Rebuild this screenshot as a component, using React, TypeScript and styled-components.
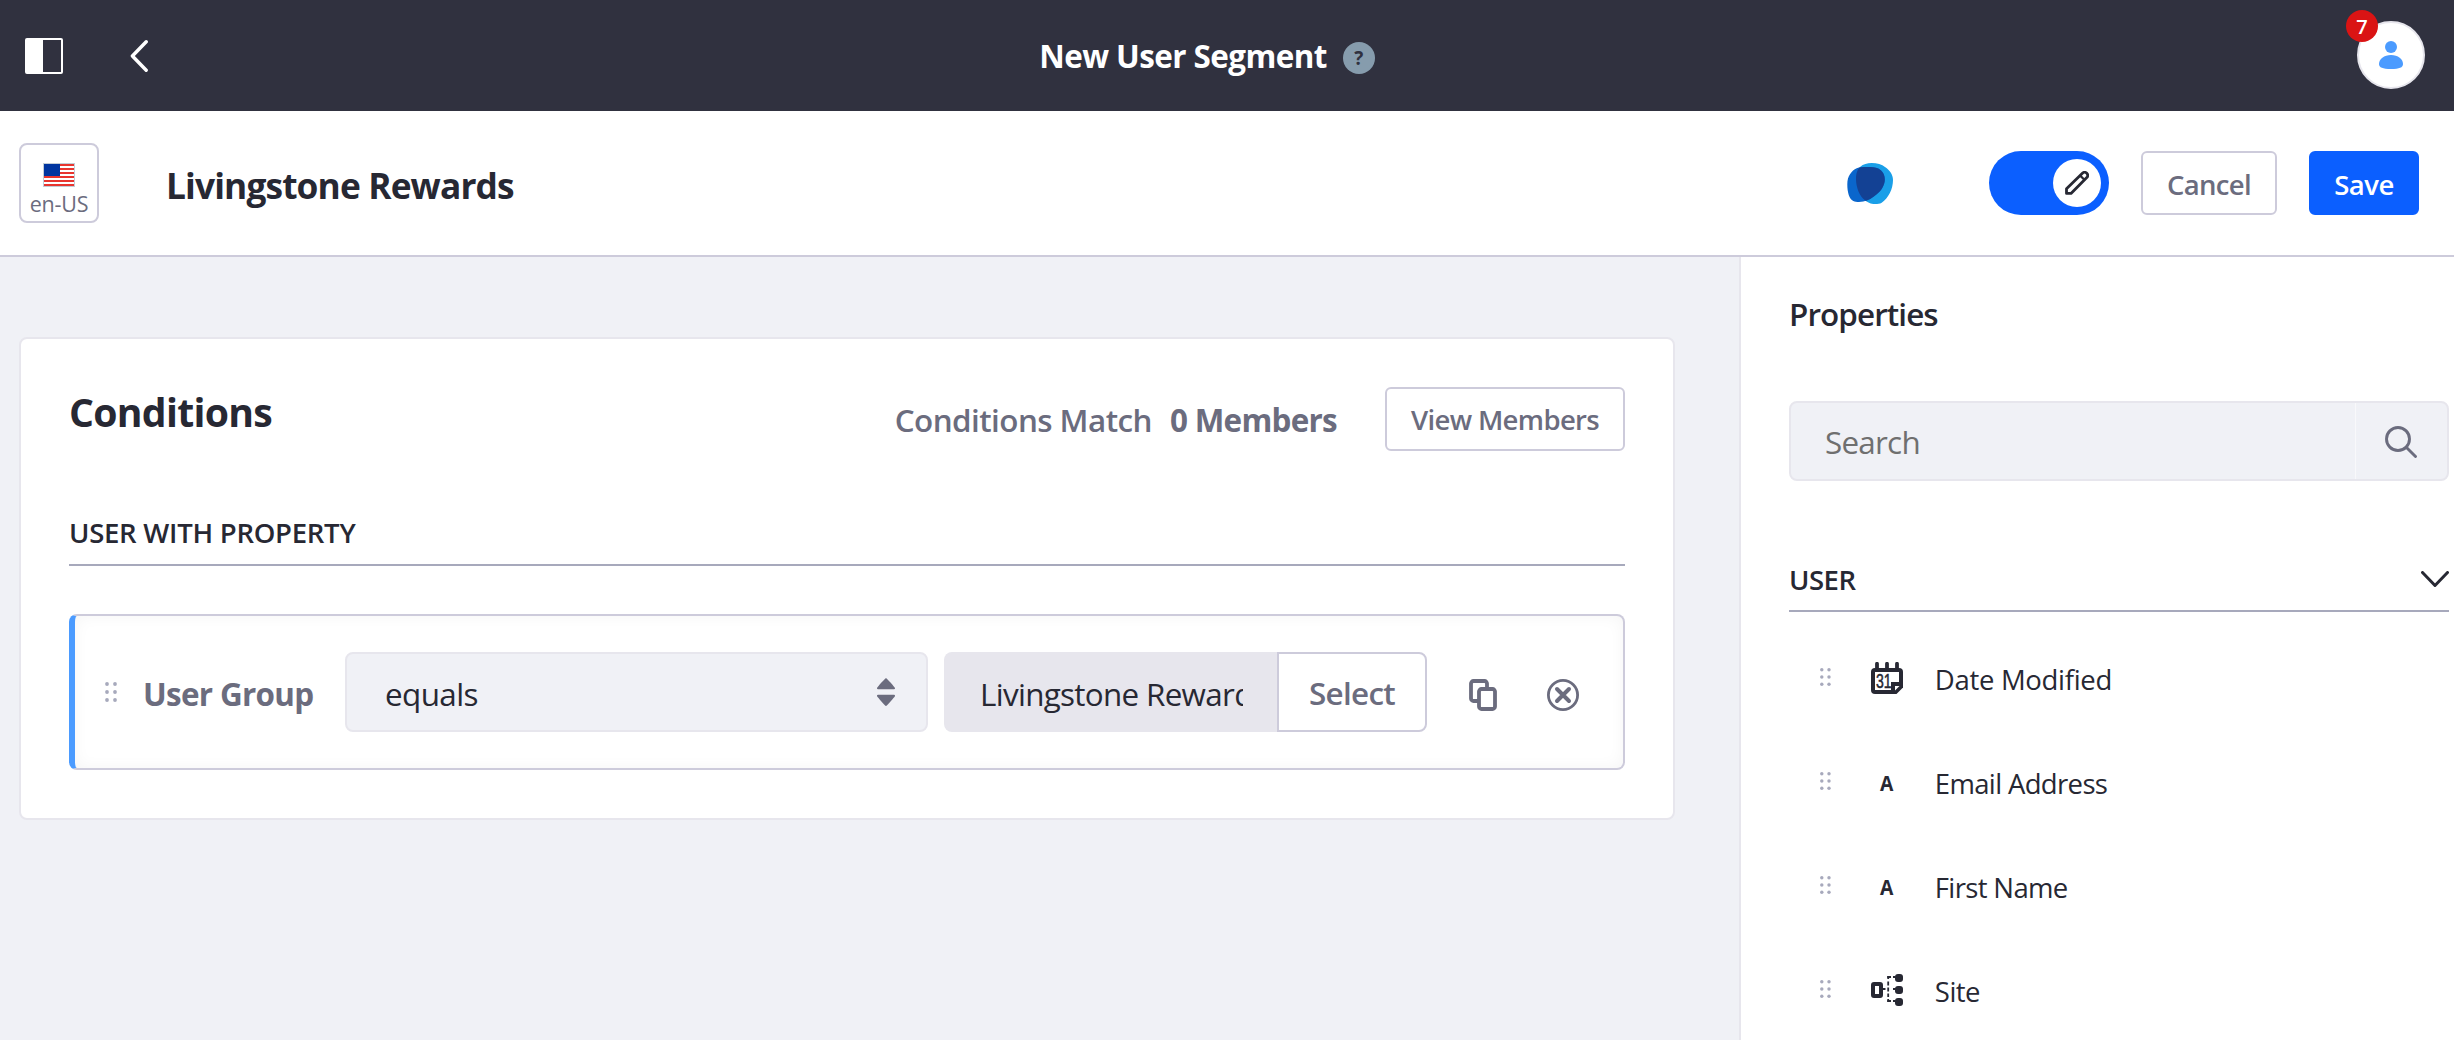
import React from 'react';
import styled, { createGlobalStyle, css } from 'styled-components';

const color = {
  dark: '#30313f',
  ink: '#272833',
  muted: '#6b6c7e',
  line: '#a7a9bc',
  border: '#cdcbdb',
  soft: '#e7e6ed',
  bg: '#f0f1f6',
  primary: '#0b5fff',
  info: '#4b9bff',
};

const GlobalStyle = createGlobalStyle`
  *, *::before, *::after { box-sizing: border-box; }
  body {
    margin: 0;
    background: ${color.bg};
    color: ${color.ink};
    font-family: 'Open Sans', 'Noto Sans', sans-serif;
  }
  svg { display: block; flex: none; }
  button, input { font-family: inherit; }
`;

const Page = styled.div`
  display: flex;
  flex-direction: column;
  width: 100%;
  height: 1040px;
  overflow: hidden;
`;

/* ---------- text ---------- */

const Label = styled.span<{ $size?: number; $weight?: number; $track?: number; $tone?: string; $drop?: number }>`
  display: block;
  white-space: nowrap;
  line-height: 40px;
  font-size: ${(p) => p.$size ?? 31.4}px;
  font-weight: ${(p) => p.$weight ?? 400};
  letter-spacing: ${(p) => p.$track ?? 0}px;
  color: ${(p) => p.$tone ?? 'inherit'};
  padding-top: ${(p) => p.$drop ?? 0}px;
`;

/* ---------- header ---------- */

const Header = styled.header`
  display: flex;
  align-items: center;
  flex: none;
  height: 111px;
  padding: 0 29px 1px 25px;
  background: ${color.dark};
  color: #fff;
`;

const HeaderNav = styled.nav`
  display: flex;
  align-items: center;
  gap: 67px;
  padding-top: 2px;
`;

const HeaderTitle = styled.div`
  display: flex;
  flex: 1;
  align-items: center;
  justify-content: center;
  gap: 16px;
  padding-right: 91px;
`;

const Help = styled.span`
  display: flex;
  align-items: center;
  justify-content: center;
  width: 32px;
  height: 32px;
  margin-top: 6px;
  border-radius: 50%;
  background: #869cad;
  color: ${color.dark};
  font-size: 19px;
  font-weight: 700;
  line-height: 32px;
`;

const Avatar = styled.div`
  position: relative;
  display: flex;
  align-items: center;
  justify-content: center;
  width: 68px;
  height: 68px;
  border: 2px solid ${color.soft};
  border-radius: 50%;
  background: #fff;
`;

const Badge = styled.span`
  position: absolute;
  top: -13px;
  left: -13px;
  width: 32px;
  height: 32px;
  border-radius: 50%;
  background: #da1414;
  color: #fff;
  font-size: 20px;
  font-weight: 600;
  line-height: 33px;
  text-align: center;
`;

/* ---------- toolbar ---------- */

const Toolbar = styled.div`
  display: flex;
  align-items: center;
  flex: none;
  height: 146px;
  padding: 0 35px 0 19px;
  border-bottom: 2px solid ${color.border};
  background: #fff;
`;

const Locale = styled.button`
  display: flex;
  flex-direction: column;
  align-items: center;
  width: 80px;
  height: 80px;
  padding: 18px 0 0;
  border: 2px solid ${color.border};
  border-radius: 8px;
  background: #fff;
  color: ${color.muted};
  font-size: 21.5px;
  letter-spacing: -0.2px;
  line-height: 28px;
`;

const LocaleText = styled.span`
  padding-top: 3px;
`;

const SegmentName = styled.div`
  flex: 1;
  padding-left: 67px;
`;

const Actions = styled.div`
  display: flex;
  align-items: center;
  gap: 32px;
`;

const Logo = styled.div`
  margin-right: 63px;
`;

const Toggle = styled.div`
  display: flex;
  align-items: center;
  justify-content: flex-end;
  width: 120px;
  height: 64px;
  padding: 8px;
  border-radius: 32px;
  background: ${color.primary};
`;

const Knob = styled.span`
  display: flex;
  align-items: center;
  justify-content: center;
  width: 48px;
  height: 48px;
  border-radius: 50%;
  background: #fff;
`;

const Button = styled.button<{ $width: number; $primary?: boolean }>`
  display: flex;
  align-items: center;
  justify-content: center;
  width: ${(p) => p.$width}px;
  height: 64px;
  padding: 0;
  border: 2px solid ${color.border};
  border-radius: 6px;
  background: #fff;
  color: ${color.muted};
  ${(p) =>
    p.$primary &&
    css`
      border-color: ${color.primary};
      background: ${color.primary};
      color: #fff;
    `}
`;

/* ---------- body ---------- */

const Body = styled.div`
  display: flex;
  flex: 1;
  min-height: 0;
`;

const Main = styled.main`
  flex: 1;
  min-width: 0;
  padding: 80px 64px 0 19px;
`;

const Card = styled.section`
  height: 483px;
  padding: 48px 48px 0;
  border: 2px solid ${color.soft};
  border-radius: 8px;
  background: #fff;
`;

const CardHeader = styled.div`
  display: flex;
  align-items: flex-start;
  height: 126px;
`;

const CardTitle = styled.h2`
  flex: 1;
  margin: 0;
  line-height: 50px;
  font-size: 39.2px;
  font-weight: 700;
  letter-spacing: -0.72px;
`;

const MatchInfo = styled.div`
  display: flex;
  gap: 18px;
  padding: 13px 48px 0 0;
`;

const GroupTitle = styled.div<{ $height: number }>`
  display: flex;
  justify-content: space-between;
  align-items: flex-start;
  height: ${(p) => p.$height}px;
  border-bottom: 2px solid ${color.line};
`;

const Condition = styled.div`
  display: flex;
  align-items: center;
  height: 156px;
  margin-top: 48px;
  padding: 0 44px 0 30px;
  border: 2px solid ${color.border};
  border-left: 6px solid ${color.info};
  border-radius: 8px;
  box-shadow: inset 0 0 16px rgba(0, 0, 0, 0.045);
`;

const ConditionLabel = styled.div`
  width: 228px;
  padding-left: 26px;
`;

const Operator = styled.div`
  display: flex;
  align-items: center;
  justify-content: space-between;
  flex: 1;
  height: 80px;
  padding: 0 31px 0 38px;
  border: 2px solid ${color.soft};
  border-radius: 8px;
  background: ${color.bg};
`;

const ValueBox = styled.div`
  display: flex;
  align-items: center;
  width: 333px;
  height: 80px;
  margin-left: 16px;
  padding: 0 34px 0 36px;
  border-radius: 8px 0 0 8px;
  background: ${color.soft};
`;

const ValueClip = styled.div`
  flex: 1;
  overflow: hidden;
`;

const SelectButton = styled.button`
  display: flex;
  align-items: center;
  justify-content: center;
  width: 150px;
  height: 80px;
  padding: 0;
  border: 2px solid ${color.border};
  border-radius: 0 8px 8px 0;
  background: #fff;
  color: ${color.muted};
`;

const RowActions = styled.div`
  display: flex;
  align-items: center;
  gap: 50px;
  padding: 6px 0 0 42px;
`;

/* ---------- sidebar ---------- */

const Sidebar = styled.aside`
  flex: none;
  width: 715px;
  padding: 37px 5px 0 48px;
  border-left: 2px solid ${color.soft};
  background: #fff;
`;

const SearchBar = styled.div`
  display: flex;
  height: 80px;
  margin: 67px 0 79px;
  border: 2px solid ${color.soft};
  border-radius: 8px;
  background: ${color.bg};
`;

const SearchText = styled.div`
  display: flex;
  align-items: center;
  flex: 1;
  padding-left: 34px;
  border-right: 1px solid #f9f9fb;
`;

const SearchButton = styled.div`
  display: flex;
  align-items: center;
  justify-content: center;
  width: 91px;
  padding: 2px 1px 0 0;
`;

const ChevronBox = styled.div`
  padding-top: 11px;
`;

const PropertyList = styled.ul`
  margin: 14px 0 0;
  padding: 0;
  list-style: none;
`;

const Property = styled.li`
  display: flex;
  align-items: center;
  height: 104px;
  padding-left: 31px;
`;

const PropertyIcon = styled.span`
  display: flex;
  align-items: center;
  justify-content: center;
  width: 32px;
  height: 32px;
  margin: 0 32px 0 40px;
`;

const TextGlyph = styled.span`
  font-size: 22px;
  font-weight: 700;
  line-height: 32px;
  transform: scaleX(0.88);
`;

const Handle = styled.span`
  padding-bottom: 2px;
`;

/* ---------- icons ---------- */

const PanelIcon = () => (
  <svg width="38" height="36" viewBox="0 0 38 36">
    <rect x="1" y="1" width="36" height="34" rx="1" fill="none" stroke="#fff" strokeWidth="2" />
    <rect x="1" y="1" width="17" height="34" fill="#fff" />
  </svg>
);

const BackIcon = () => (
  <svg width="18" height="32" viewBox="0 0 18 32">
    <path d="M16.2 1.8 2.4 16l13.8 14.2" fill="none" stroke="#fff" strokeWidth="3.4" strokeLinecap="round" strokeLinejoin="round" />
  </svg>
);

const UserIcon = () => (
  <svg width="24" height="28" viewBox="0 0 24 28">
    <circle cx="12" cy="6" r="6" fill={color.info} />
    <path d="M12 14c7 0 12 4.2 12 9 0 3.6-3.6 5-12 5S0 26.6 0 23c0-4.8 5-9 12-9z" fill={color.info} />
  </svg>
);

const FlagIcon = () => (
  <svg width="32" height="24" viewBox="0 0 32 24">
    <rect width="32" height="24" fill="#c3cdd6" />
    <rect x="1" y="1" width="30" height="22" fill="#fff" />
    {[1, 5, 9, 13, 17, 21].map((y) => (
      <rect key={y} x="1" y={y} width="30" height="2" fill="#e8352f" />
    ))}
    <rect x="1" y="1" width="16" height="12" fill="#0035a0" />
  </svg>
);

const LIGHT_BLOB =
  'M10 18.3C10 12 11.5 8.5 14 6 17.5 3 21 2 25.7 2 31 2 36 3.5 39 6 44 9.5 47 13.5 47 19 47 28 42.5 37 35.7 41.7 33 43.2 30 43.2 27.3 43 23.5 42.5 21 41 19 39.3 13.5 35 10.2 27 10 18.3z';
const BLUE_BLOB =
  'M1.3 23.3C1.3 19 2.3 15.8 4 13.3 6 10.3 8 8.5 10.7 7.3 13.5 6 17 6 20.7 6 25.5 6 29.5 6.2 32.3 7.6 36.500 9.8 38.8 14 38.8 18.5 38.8 24 35.5 29.5 30.7 33.3 26.5 37 22 39.5 17.3 40.6 14 41.3 10 41.3 7.3 40 3.2 38 1.3 31.5 1.3 23.3z';

const BlobLogo = () => (
  <svg width="48" height="44" viewBox="0 0 48 44">
    <clipPath id="blob-overlap">
      <path d={LIGHT_BLOB} />
    </clipPath>
    <path d={LIGHT_BLOB} fill="#1a9fe8" />
    <path d={BLUE_BLOB} fill="#0a66cc" />
    <path d={BLUE_BLOB} fill="#134194" clipPath="url(#blob-overlap)" />
  </svg>
);

const PencilIcon = () => (
  <svg width="24" height="24" viewBox="0 0 24 24" fill="none" stroke={color.ink} strokeWidth="2.8" strokeLinejoin="round">
    <path d="M1.5 17.8 17.4 2.2a3.1 3.1 0 0 1 4.4 4.4L6 22.4H1.5z" />
    <path d="m15.2 4.6 4.2 4.2" strokeWidth="2.2" />
  </svg>
);

const SortIcon = () => (
  <svg width="18" height="28" viewBox="0 0 18 28" fill={color.muted}>
    <path d="M9 0c.6 0 8.6 9 8.9 9.8.3.8 0 1.4-.9 1.4H1c-.9 0-1.2-.6-.9-1.4C.4 9 8.4 0 9 0z" />
    <path d="M9 28c.6 0 8.6-9 8.9-9.8.3-.8 0-1.4-.9-1.4H1c-.9 0-1.2.6-.9 1.4C.4 19 8.4 28 9 28z" />
  </svg>
);

const DragIcon = ({ scale = 1 }: { scale?: number }) => (
  <svg width={12 * scale} height={20 * scale} viewBox="0 0 12 20" fill={color.line}>
    {[2, 10, 18].map((y) => (
      <React.Fragment key={y}>
        <circle cx="2" cy={y} r="1.9" />
        <circle cx="10" cy={y} r="1.9" />
      </React.Fragment>
    ))}
  </svg>
);

const CopyIcon = () => (
  <svg width="28" height="32" viewBox="0 0 28 32" fill="none" stroke={color.muted} strokeWidth="3.8">
    <path d="M9 22H4.5A2.5 2.5 0 0 1 2 19.5v-15A2.5 2.5 0 0 1 4.5 2h11A2.5 2.5 0 0 1 18 4.5V9" />
    <rect x="10" y="10" width="16" height="20" rx="2.5" />
  </svg>
);

const RemoveIcon = () => (
  <svg width="32" height="32" viewBox="0 0 32 32" fill="none" stroke={color.muted}>
    <circle cx="16" cy="16" r="14.6" strokeWidth="2.8" />
    <path d="m10 10 12 12M22 10 10 22" strokeWidth="4" strokeLinecap="round" />
  </svg>
);

const SearchIcon = () => (
  <svg width="32" height="32" viewBox="0 0 32 32" fill="none" stroke={color.muted} strokeWidth="2.9" strokeLinecap="round">
    <circle cx="13" cy="13" r="11.5" />
    <path d="m21.5 21.5 9 9" />
  </svg>
);

const ChevronDown = () => (
  <svg width="28" height="17" viewBox="0 0 28 17">
    <path d="m1.5 1.5 12.5 13 12.500-13" fill="none" stroke={color.ink} strokeWidth="3" strokeLinecap="round" strokeLinejoin="round" />
  </svg>
);

const CalendarIcon = () => (
  <svg width="32" height="32" viewBox="0 0 32 32">
    <path d="M6 1.8V8M16 1.8V8M26 1.8V8" stroke={color.ink} strokeWidth="3.8" strokeLinecap="round" />
    <path d="M4 6h24a4 4 0 0 1 4 4v15.5L25.500 32H4a4 4 0 0 1-4-4V10a4 4 0 0 1 4-4z" fill={color.ink} />
    <path d="M4 10h24v10h-8v8H4z" fill="#fff" />
    <path d="M24 24h4.5L24 28.5z" fill="#fff" />
    <text transform="translate(5 26) scale(.72 1)" fontFamily="Liberation Sans, sans-serif" fontSize="19.5" stroke={color.ink} strokeWidth=".5" fill={color.ink}>
      31
    </text>
  </svg>
);

const SiteIcon = () => (
  <svg width="32" height="32" viewBox="0 0 32 32" fill={color.ink}>
    <rect x="2" y="10" width="8" height="12" rx="1" fill="none" stroke={color.ink} strokeWidth="4" />
    <path d="M12 15h2.5M22 15h3M16.3 3H20M22 3h2.5M16.3 27H20M22 27h2.5" stroke={color.ink} strokeWidth="1.8" />
    <path d="M17.2 2.1v3M17.2 7.5v4M17.2 13.5v4M17.2 19.5V23M17.2 25v2.9" stroke={color.ink} strokeWidth="1.8" />
    <rect x="24" y="0" width="8" height="8" rx="3" />
    <rect x="24" y="12" width="8" height="8" rx="3" />
    <rect x="24" y="24" width="8" height="8" rx="3" />
  </svg>
);

/* ---------- data ---------- */

const properties = [
  { name: 'Date Modified', icon: <CalendarIcon />, track: -0.3 },
  { name: 'Email Address', icon: <TextGlyph>A</TextGlyph>, track: -0.65 },
  { name: 'First Name', icon: <TextGlyph>A</TextGlyph>, track: -0.65 },
  { name: 'Site', icon: <SiteIcon />, track: -0.5 },
];

export default function App() {
  return (
    <>
      <GlobalStyle />
      <Page>
        <Header>
          <HeaderNav>
            <PanelIcon />
            <BackIcon />
          </HeaderNav>
          <HeaderTitle>
            <Label $weight={700} $track={-0.56} $drop={1}>New User Segment</Label>
            <Help>?</Help>
          </HeaderTitle>
          <Avatar>
            <UserIcon />
            <Badge>7</Badge>
          </Avatar>
        </Header>

        <Toolbar>
          <Locale>
            <FlagIcon />
            <LocaleText>en-US</LocaleText>
          </Locale>
          <SegmentName>
            <Label $size={35.3} $weight={700} $track={-0.87} $drop={4}>Livingstone Rewards</Label>
          </SegmentName>
          <Actions>
            <Logo>
              <BlobLogo />
            </Logo>
            <Toggle>
              <Knob>
                <PencilIcon />
              </Knob>
            </Toggle>
            <Button $width={136}>
              <Label $size={27.5} $weight={600} $track={-0.64} $drop={4}>Cancel</Label>
            </Button>
            <Button $width={110} $primary>
              <Label $size={27.5} $weight={600} $track={-0.5} $drop={4}>Save</Label>
            </Button>
          </Actions>
        </Toolbar>

        <Body>
          <Main>
            <Card>
              <CardHeader>
                <CardTitle>Conditions</CardTitle>
                <MatchInfo>
                  <Label $weight={600} $track={-0.55} $tone={color.muted}>Conditions Match</Label>
                  <Label $weight={700} $track={-0.7} $tone={color.muted}>0 Members</Label>
                </MatchInfo>
                <Button $width={240}>
                  <Label $size={27.5} $weight={600} $track={-0.64} $drop={2}>View Members</Label>
                </Button>
              </CardHeader>
              <GroupTitle $height={53}>
                <Label $size={27.5} $weight={600} $track={-0.26}>USER WITH PROPERTY</Label>
              </GroupTitle>
              <Condition>
                <DragIcon />
                <ConditionLabel>
                  <Label $weight={700} $track={-0.67} $tone={color.muted} $drop={3}>User Group</Label>
                </ConditionLabel>
                <Operator>
                  <Label $track={-0.6} $drop={3}>equals</Label>
                  <SortIcon />
                </Operator>
                <ValueBox>
                  <ValueClip>
                    <Label $track={-0.69} $drop={3}>Livingstone Rewards</Label>
                  </ValueClip>
                </ValueBox>
                <SelectButton>
                  <Label $weight={600} $track={-0.7} $drop={2}>Select</Label>
                </SelectButton>
                <RowActions>
                  <CopyIcon />
                  <RemoveIcon />
                </RowActions>
              </Condition>
            </Card>
          </Main>

          <Sidebar>
            <Label $weight={600} $track={-0.9}>Properties</Label>
            <SearchBar>
              <SearchText>
                <Label $track={-0.75} $tone="#6f6f6f" $drop={2}>Search</Label>
              </SearchText>
              <SearchButton>
                <SearchIcon />
              </SearchButton>
            </SearchBar>
            <GroupTitle $height={52}>
              <Label $size={27.5} $weight={600} $track={-0.5}>USER</Label>
              <ChevronBox>
                <ChevronDown />
              </ChevronBox>
            </GroupTitle>
            <PropertyList>
              {properties.map((p) => (
                <Property key={p.name}>
                  <Handle>
                    <DragIcon scale={0.9} />
                  </Handle>
                  <PropertyIcon>{p.icon}</PropertyIcon>
                  <Label $size={27.5} $track={p.track} $drop={4}>{p.name}</Label>
                </Property>
              ))}
            </PropertyList>
          </Sidebar>
        </Body>
      </Page>
    </>
  );
}
